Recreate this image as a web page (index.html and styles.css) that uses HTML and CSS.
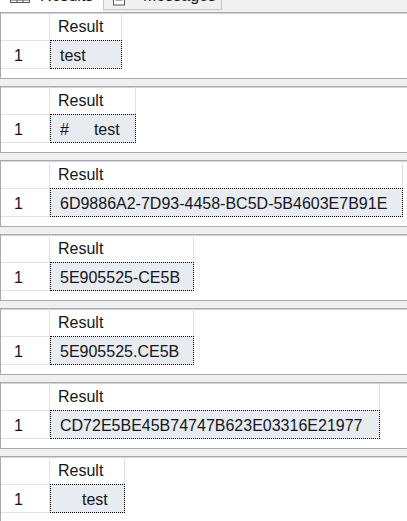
FILE: index.html
```html
<!DOCTYPE html>
<html>
<head>
<meta charset="utf-8">
<link rel="stylesheet" href="styles.css">
</head>
<body>
<div class="tabs">
  <div class="tab tab--results">
    <svg class="tab-icon" width="20" height="12" viewBox="0 0 20 12"><rect x="0.5" y="0.5" width="19" height="10" fill="#fff" stroke="#555"/><line x1="7" y1="0" x2="7" y2="11" stroke="#555"/><line x1="13" y1="0" x2="13" y2="11" stroke="#555"/><line x1="0" y1="8" x2="20" y2="8" stroke="#555"/></svg>
    <span class="tab-label">Results</span>
  </div>
  <div class="tab tab--messages">
    <svg class="tab-icon" width="16" height="12" viewBox="0 0 16 12"><rect x="0.5" y="0" width="11" height="11" fill="#fff" stroke="#555"/><line x1="2.5" y1="3" x2="9.5" y2="3" stroke="#555"/><line x1="2.5" y1="6" x2="9.5" y2="6" stroke="#555"/><rect x="11" y="1" width="4" height="4" fill="#555"/></svg>
    <span class="tab-label">Messages</span>
  </div>
</div>
<div class="panes">
  <section class="grid">
    <div class="row row--head"><div class="num"></div><div class="col col--w72">Result</div></div>
    <div class="row row--data"><div class="num">1</div><div class="col col--w72 cell">test</div></div>
  </section>
  <section class="grid">
    <div class="row row--head"><div class="num"></div><div class="col col--w86">Result</div></div>
    <div class="row row--data"><div class="num">1</div><div class="col col--w86 cell"><span>#</span><span class="tabgap"></span><span>test</span></div></div>
  </section>
  <section class="grid">
    <div class="row row--head"><div class="num"></div><div class="col col--w353">Result</div></div>
    <div class="row row--data"><div class="num">1</div><div class="col col--w353 cell">6D9886A2-7D93-4458-BC5D-5B4603E7B91E</div></div>
  </section>
  <section class="grid">
    <div class="row row--head"><div class="num"></div><div class="col col--w144">Result</div></div>
    <div class="row row--data"><div class="num">1</div><div class="col col--w144 cell">5E905525-CE5B</div></div>
  </section>
  <section class="grid">
    <div class="row row--head"><div class="num"></div><div class="col col--w144">Result</div></div>
    <div class="row row--data"><div class="num">1</div><div class="col col--w144 cell">5E905525.CE5B</div></div>
  </section>
  <section class="grid">
    <div class="row row--head"><div class="num"></div><div class="col col--w330">Result</div></div>
    <div class="row row--data"><div class="num">1</div><div class="col col--w330 cell">CD72E5BE45B74747B623E03316E21977</div></div>
  </section>
  <section class="grid">
    <div class="row row--head"><div class="num"></div><div class="col col--w75">Result</div></div>
    <div class="row row--data"><div class="num">1</div><div class="col col--w75 cell cell--indent">test</div></div>
  </section>
</div>
</body>
</html>
```

FILE: styles.css
```css
* { box-sizing: border-box; }

html, body {
  margin: 0;
  padding: 0;
}

body {
  background: #f0f0f0;
  font-family: "Liberation Sans", Arial, sans-serif;
  font-size: 16px;
  color: #141420;
  overflow: hidden;
  width: 407px;
  height: 521px;
}

.tabs {
  height: 12px;
  display: flex;
  overflow: hidden;
  background: #f0f0f0;
}

.tab {
  display: flex;
  align-items: flex-start;
  overflow: hidden;
}

.tab--results {
  width: 103px;
  height: 12px;
  background: #fff;
  padding-left: 10px;
  gap: 10px;
}

.tab--messages {
  width: 119px;
  height: 10px;
  border: 1px solid #c8c8c8;
  border-top: none;
  padding-left: 9px;
  gap: 14px;
}

.tab-icon {
  flex: none;
  margin-top: -8px;
}

.tab--messages .tab-icon {
  margin-top: -6px;
}

.tab-label {
  line-height: 16px;
  margin-top: -12px;
  white-space: nowrap;
}

.tab--messages .tab-label {
  margin-top: -12px;
}

.panes {
  display: flex;
  flex-direction: column;
  gap: 7px;
}

.grid {
  height: 67px;
  background: #fff;
  border: 1px solid #a9a9b0;
  border-right: none;
  box-shadow: inset 0 1px 0 #d4d4d8;
}

.row {
  display: flex;
}

.row--head {
  height: 27px;
  line-height: 27px;
}

.row--data {
  height: 29px;
  line-height: 29px;
}

.num {
  width: 49px;
  flex: none;
  border-right: 1px solid #e2e2e2;
  padding-left: 13px;
}

.row--data .num {
  border-top: 1px solid #e2e2e2;
  border-bottom: 1px solid #e2e2e2;
}

.row--head .col {
  border-right: 1px solid #e2e2e2;
  padding-left: 8px;
}

.cell {
  background: #e8ecf0;
  border: 1px dotted #000;
  line-height: 27px;
  padding-left: 9px;
  padding-top: 1px;
  white-space: pre;
}

.cell--indent {
  padding-left: 31px;
}

.tabgap {
  display: inline-block;
  width: 25px;
}

.col--w72 { width: 72px; }
.col--w86 { width: 86px; }
.col--w353 { width: 353px; }
.col--w144 { width: 144px; }
.col--w330 { width: 330px; }
.col--w75 { width: 75px; }
```
